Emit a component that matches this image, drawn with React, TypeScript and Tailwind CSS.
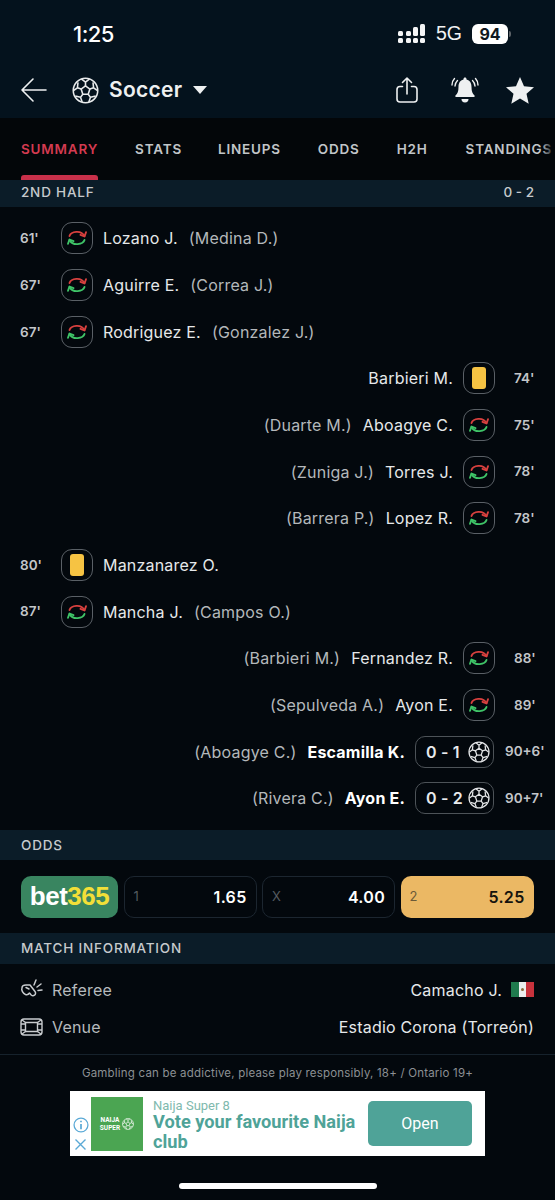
const Ball = ({ size = 26, className = "" }: { size?: number; className?: string }) => (
  <svg width={size} height={size} viewBox="0 0 26 26" fill="none" stroke="currentColor" strokeWidth="1.5" strokeLinejoin="round" className={className}>
    <circle cx="13" cy="13" r="11.8" />
    <path d="M13 8.6l4.2 3-1.6 5h-5.2l-1.6-5z" />
    <path d="M13 8.6V5M9 1.8L13 5l4-3.2M17.2 11.6l3.6-1.2M20.8 10.4l-.6-5.2M20.8 10.4l3.8 2.8M15.6 16.6l2.2 3M17.8 19.6l5-1.4M17.8 19.6l-1.6 4.4M10.4 16.6l-2.2 3M8.2 19.6l-5-1.4M8.2 19.6l1.6 4.4M8.8 11.6l-3.6-1.2M5.2 10.4l.6-5.2M5.2 10.4l-3.8 2.8" />
  </svg>
);

const SubIcon = () => (
  <div className="flex h-[32px] w-[32px] items-center justify-center rounded-[11px] border-[1.5px] border-[#5a6066]">
    <svg width="22" height="20" viewBox="0 0 22 20" fill="none" strokeWidth="1.9" strokeLinecap="round" strokeLinejoin="round">
      <path d="M3.5 8C5 3.500 15 1.500 18.500 8" stroke="#d8413f" />
      <path d="M14.500 6.800L18.500 8.500L20 4.200" stroke="#d8413f" />
      <path d="M18.500 12C17 16.500 7 18.500 3.500 12" stroke="#3fc468" />
      <path d="M7.500 13.200L3.500 11.500L2 15.800" stroke="#3fc468" />
    </svg>
  </div>
);

const YellowCard = () => (
  <div className="flex h-[32px] w-[32px] items-center justify-center rounded-[11px] border-[1.5px] border-[#5a6066]">
    <div className="h-[22px] w-[14px] rounded-[3px] bg-[#f6c343]" />
  </div>
);

const GoalBadge = ({ score }: { score: string }) => (
  <div className="flex h-[32px] w-[79px] items-center justify-between rounded-[10px] border-[1.5px] border-[#4d5358] pl-[10px] pr-[3px] text-[16px] font-semibold text-[#e8eaec]">
    <span>{score}</span>
    <Ball size={22} className="text-[#e2e4e6]" />
  </div>
);

type Ev = {
  min: string;
  side: "l" | "r";
  name: string;
  assist?: string;
  kind: "sub" | "card" | "goal";
  score?: string;
};

const events: Ev[] = [
  { min: "61'", side: "l", name: "Lozano J.", assist: "(Medina D.)", kind: "sub" },
  { min: "67'", side: "l", name: "Aguirre E.", assist: "(Correa J.)", kind: "sub" },
  { min: "67'", side: "l", name: "Rodriguez E.", assist: "(Gonzalez J.)", kind: "sub" },
  { min: "74'", side: "r", name: "Barbieri M.", kind: "card" },
  { min: "75'", side: "r", name: "Aboagye C.", assist: "(Duarte M.)", kind: "sub" },
  { min: "78'", side: "r", name: "Torres J.", assist: "(Zuniga J.)", kind: "sub" },
  { min: "78'", side: "r", name: "Lopez R.", assist: "(Barrera P.)", kind: "sub" },
  { min: "80'", side: "l", name: "Manzanarez O.", kind: "card" },
  { min: "87'", side: "l", name: "Mancha J.", assist: "(Campos O.)", kind: "sub" },
  { min: "88'", side: "r", name: "Fernandez R.", assist: "(Barbieri M.)", kind: "sub" },
  { min: "89'", side: "r", name: "Ayon E.", assist: "(Sepulveda A.)", kind: "sub" },
  { min: "90+6'", side: "r", name: "Escamilla K.", assist: "(Aboagye C.)", kind: "goal", score: "0 - 1" },
  { min: "90+7'", side: "r", name: "Ayon E.", assist: "(Rivera C.)", kind: "goal", score: "0 - 2" },
];

function EventRow({ ev }: { ev: Ev }) {
  const icon = ev.kind === "sub" ? <SubIcon /> : ev.kind === "card" ? <YellowCard /> : <GoalBadge score={ev.score ?? ""} />;
  if (ev.side === "l") {
    return (
      <div className="flex h-[46.67px] items-center pl-[20px] text-[16px] tracking-[0.2px]">
        <span className="w-[41px] text-[13.5px] font-semibold tracking-normal text-[#c3c6c9]">{ev.min}</span>
        {icon}
        <span className="ml-[10px] text-[#e6e8ea]">{ev.name}</span>
        {ev.assist && <span className="ml-[11px] text-[#b4b8bb]">{ev.assist}</span>}
      </div>
    );
  }
  return (
    <div className="flex h-[46.67px] items-center justify-end text-[16px] tracking-[0.2px]">
      {ev.assist && <span className="mr-[11px] text-[#b4b8bb]">{ev.assist}</span>}
      <span className={ev.kind === "goal" ? "font-bold text-white" : "text-[#e6e8ea]"}>{ev.name}</span>
      <span className="ml-[10px]">{icon}</span>
      <span className={(ev.kind === "goal" ? "w-[61px] pl-[11px] " : "w-[60px] pl-[19px] ") + "text-[13.5px] font-semibold tracking-normal text-[#c3c6c9]"}>{ev.min}</span>
    </div>
  );
}

function OddBox({ label, value, hot }: { label: string; value: string; hot?: boolean }) {
  return (
    <div
      className={
        "flex h-[42px] w-[133px] items-center justify-between rounded-[10px] px-[9px] " +
        (hot ? "bg-[#ebb864] text-[#15130d]" : "border border-[#1c2630] text-white")
      }
    >
      <span className={"text-[13px] " + (hot ? "text-[#6b5a38]" : "text-[#555b60]")}>{label}</span>
      <span className="text-[16px] font-semibold tracking-[0.3px]">{value}</span>
    </div>
  );
}

const SectionBar = ({ children, h }: { children: React.ReactNode; h: string }) => (
  <div className={"flex items-center justify-between bg-[#0b1c28] px-[21px] text-[13.5px] font-medium tracking-[0.8px] text-[#c6cacd] " + h}>
    {children}
  </div>
);

export default function App() {
  return (
    <div className="flex h-[1200px] w-[555px] flex-col overflow-hidden bg-[#03080d] font-['Inter',sans-serif]">
      {/* status + title */}
      <div className="h-[118px] bg-[#04121d] text-white">
        <div className="flex h-[66px] items-center justify-between pl-[73px] pr-[44px] pt-[2px]">
          <span className="text-[22px] font-medium tracking-[-0.5px]">1:25</span>
          <div className="flex items-center">
            <svg width="28" height="20" viewBox="0 0 28 20" fill="#f4f5f6">
              <rect x="0" y="7" width="5" height="5" rx="1.5" />
              <rect x="0" y="14" width="5" height="5" rx="1.5" />
              <rect x="8" y="7" width="5" height="5" rx="1.5" />
              <rect x="8" y="14" width="5" height="5" rx="1.5" />
              <rect x="15" y="3" width="5" height="9" rx="1.5" />
              <rect x="15" y="14" width="5" height="5" rx="1.5" />
              <rect x="22" y="0" width="5" height="12" rx="1.5" />
              <rect x="22" y="14" width="5" height="5" rx="1.5" />
            </svg>
            <span className="ml-[10px] font-['Liberation_Sans',sans-serif] text-[19.5px] text-[#f2f3f4]">5G</span>
            <div className="ml-[10px] flex h-[20px] w-[36px] items-center justify-center rounded-[6px] bg-white text-[16px] font-bold text-[#101820]">94</div>
            <div className="ml-[1px] h-[6px] w-[2px] rounded-r-full bg-[#5d6368]" />
          </div>
        </div>
        <div className="mt-[6px] flex h-[36px] items-center pl-[20px] pr-[21px]">
          <svg width="28" height="26" viewBox="0 0 28 26" fill="none" stroke="#eef0f1" strokeWidth="1.6" strokeLinecap="round" strokeLinejoin="round">
            <path d="M26 13H2M13 2L2 13l11 11" />
          </svg>
          <Ball size={27} className="ml-[24px] text-[#e8eaeb]" />
          <span className="ml-[10px] text-[21px] font-semibold tracking-[0.3px] text-[#eef0f1]">Soccer</span>
          <div className="ml-[11px] h-0 w-0 border-x-[7.5px] border-t-[8px] border-x-transparent border-t-[#eef0f1]" />
          <svg className="ml-auto" width="24" height="28" viewBox="0 0 24 28" fill="none" stroke="#eef0f1" strokeWidth="1.6" strokeLinecap="round" strokeLinejoin="round">
            <path d="M7.5 10.5H5a3 3 0 0 0-3 3V23a3 3 0 0 0 3 3h14a3 3 0 0 0 3-3v-9.500a3 3 0 0 0-3-3h-2.500" />
            <path d="M12 18V2M7.500 6.500L12 2l4.500 4.500" />
          </svg>
          <svg className="ml-[32px]" width="28" height="28" viewBox="0 0 28 28" fill="none" stroke="#eef0f1" strokeWidth="1.4" strokeLinecap="round">
            <path d="M14 1.500c.9 0 1.500.7 1.500 1.500v.6c3.500.8 5 3.700 5 7.400 0 4.500 1 6.500 3 8.500.6.700.2 1.500-.7 1.500H5.200c-.9 0-1.300-.8-.7-1.500 2-2 3-4 3-8.500 0-3.700 1.500-6.600 5-7.400V3c0-.8.600-1.500 1.500-1.500z" fill="#eef0f1" stroke="none" />
            <path d="M10.500 23h7a3.500 3.500 0 0 1-7 0z" fill="#eef0f1" stroke="none" />
            <path d="M6.500 4.500C5 6 4.200 7.800 4 10M3.500 2.500C1.800 4.300 1 6.500 1 9M21.500 4.500C23 6 23.800 7.800 24 10M24.500 2.500C26.200 4.300 27 6.500 27 9" />
          </svg>
          <svg className="ml-[27px]" width="28" height="27" viewBox="0 0 28 27" fill="#eef0f1">
            <path d="M14 0l4 9.200 10 1-7.500 6.600 2.200 9.900L14 21.600l-8.700 5.100 2.200-9.900L0 10.200l10-1z" />
          </svg>
        </div>
      </div>

      {/* tabs */}
      <div className="relative flex h-[62px] items-center overflow-hidden bg-[#030609] pl-[21px] text-[13.5px] font-semibold tracking-[0.8px] text-[#c1c5c8]">
        <div className="relative text-[#d43a50]">
          SUMMARY
          <div className="absolute inset-x-0 top-[36px] h-[5px] rounded-t-[3px] bg-[#c9304a]" />
        </div>
        <span className="ml-[37px]">STATS</span>
        <span className="ml-[36px]">LINEUPS</span>
        <span className="ml-[37px]">ODDS</span>
        <span className="ml-[37px]">H2H</span>
        <span className="ml-[38px] shrink-0">STANDINGS</span>
        <div className="absolute inset-y-0 right-0 w-[14px] bg-gradient-to-r from-transparent to-[#030609]" />
      </div>

      <SectionBar h="h-[27px] pb-[3px]">
        <span>2ND HALF</span>
        <span className="tracking-normal">0 - 2</span>
      </SectionBar>

      <div className="h-[623px] pt-[8px]">
        {events.map((ev, i) => (
          <EventRow key={i} ev={ev} />
        ))}
      </div>

      <SectionBar h="h-[30px]">
        <span>ODDS</span>
      </SectionBar>

      <div className="flex h-[73px] items-center gap-[5.5px] pl-[21px]">
        <div className="flex h-[42px] w-[97px] shrink-0 items-center justify-center rounded-[10px] bg-[#398560] font-['Liberation_Sans',sans-serif] text-[26px] font-bold tracking-[-0.5px]">
          <span className="text-white">bet</span>
          <span className="text-[#f2df38]">365</span>
        </div>
        <OddBox label="1" value="1.65" />
        <OddBox label="X" value="4.00" />
        <OddBox label="2" value="5.25" hot />
      </div>

      <SectionBar h="h-[31px]">
        <span>MATCH INFORMATION</span>
      </SectionBar>

      <div className="h-[91px] border-b border-[#16222c] pt-[7px] text-[16px] tracking-[0.2px]">
        <div className="flex h-[37px] items-center pl-[20px] pr-[21px]">
          <svg width="23" height="23" viewBox="0 0 23 23" fill="none" stroke="#c9cccf" strokeWidth="1.500" strokeLinecap="round" strokeLinejoin="round">
            <path d="M2 10c0-2 2-3 4-3h4l5 6.500c1 1.300.5 3-.5 3.700s-2.300.6-3.300-.2L9.500 15c-1 1.500-2.500 2-4 1.500C3 15.500 1 12 2 10z" />
            <path d="M6 9.500l3 1.500M14 7l2-5M17 9l4-3M18 12.500l4-.5" />
          </svg>
          <span className="ml-[9px] text-[#b6babd]">Referee</span>
          <span className="ml-auto text-[#e6e8ea]">Camacho J.</span>
          <div className="ml-[9px] flex h-[15px] w-[23px]">
            <div className="flex-1 bg-[#1f7a4d]" />
            <div className="flex flex-1 items-center justify-center bg-[#eceeee]">
              <div className="h-[3px] w-[3px] rounded-full bg-[#8a6a3a]" />
            </div>
            <div className="flex-1 bg-[#c8323c]" />
          </div>
        </div>
        <div className="flex h-[37px] items-center pl-[20px] pr-[21px]">
          <svg width="23" height="20" viewBox="0 0 23 20" fill="none" stroke="#c9cccf" strokeWidth="1.400" strokeLinejoin="round">
            <rect x="1" y="2" width="21" height="16" rx="3" />
            <rect x="5.500" y="5.500" width="12" height="9" />
            <path d="M5.500 5.500L2 3M17.500 5.500L21 3M5.500 14.500L2 17M17.500 14.500L21 17M1 7h4.500M1 13h4.500M17.500 7H22M17.500 13H22" />
          </svg>
          <span className="ml-[9px] text-[#b6babd]">Venue</span>
          <span className="ml-auto text-[#e6e8ea]">Estadio Corona (Torreón)</span>
        </div>
      </div>

      <p className="mt-[10px] text-center text-[11.5px] tracking-[0.2px] text-[#8c9094]">
        Gambling can be addictive, please play responsibly, 18+ / Ontario 19+
      </p>

      {/* ad banner */}
      <div className="mx-auto mt-[9px] flex h-[65px] w-[415px] shrink-0 bg-white font-['Roboto',sans-serif]">
        <div className="flex w-[21px] flex-col items-center justify-end pb-[5px]">
          <svg width="16" height="16" viewBox="0 0 15 15" fill="none" stroke="#5aa9d6" strokeWidth="1.200">
            <circle cx="7.500" cy="7.500" r="6.500" />
            <path d="M7.500 6.500v5M7.500 3.500v1.500" strokeWidth="1.600" />
          </svg>
          <svg className="mt-[5px]" width="13" height="13" viewBox="0 0 13 13" fill="none" stroke="#5aa9d6" strokeWidth="1.400">
            <path d="M1.500 1.500l10 10M11.500 1.500l-10 10" />
          </svg>
        </div>
        <div className="mt-[6px] flex h-[54px] w-[52px] items-center justify-center gap-[2px] bg-[#4ba552] text-[6.5px] font-bold leading-[8px] text-white">
          <span className="text-center">
            NAIJA
            <br />
            SUPER
          </span>
          <Ball size={12} className="text-white" />
        </div>
        <div className="ml-[10px] w-[210px]">
          <div className="mt-[7px] text-[13px] leading-[16px] text-[#80b9ae]">Naija Super 8</div>
          <div className="mt-[-2px] text-[18.2px] font-bold leading-[20px] text-[#4fa398]">Vote your favourite Naija club</div>
        </div>
        <div className="ml-[5px] mt-[10px] flex h-[45px] w-[104px] items-center justify-center rounded-[5px] bg-[#4fa398] text-[16px] text-white">
          Open
        </div>
      </div>

      <div className="mx-auto mt-[27px] h-[6px] w-[198px] rounded-full bg-white" />
    </div>
  );
}
